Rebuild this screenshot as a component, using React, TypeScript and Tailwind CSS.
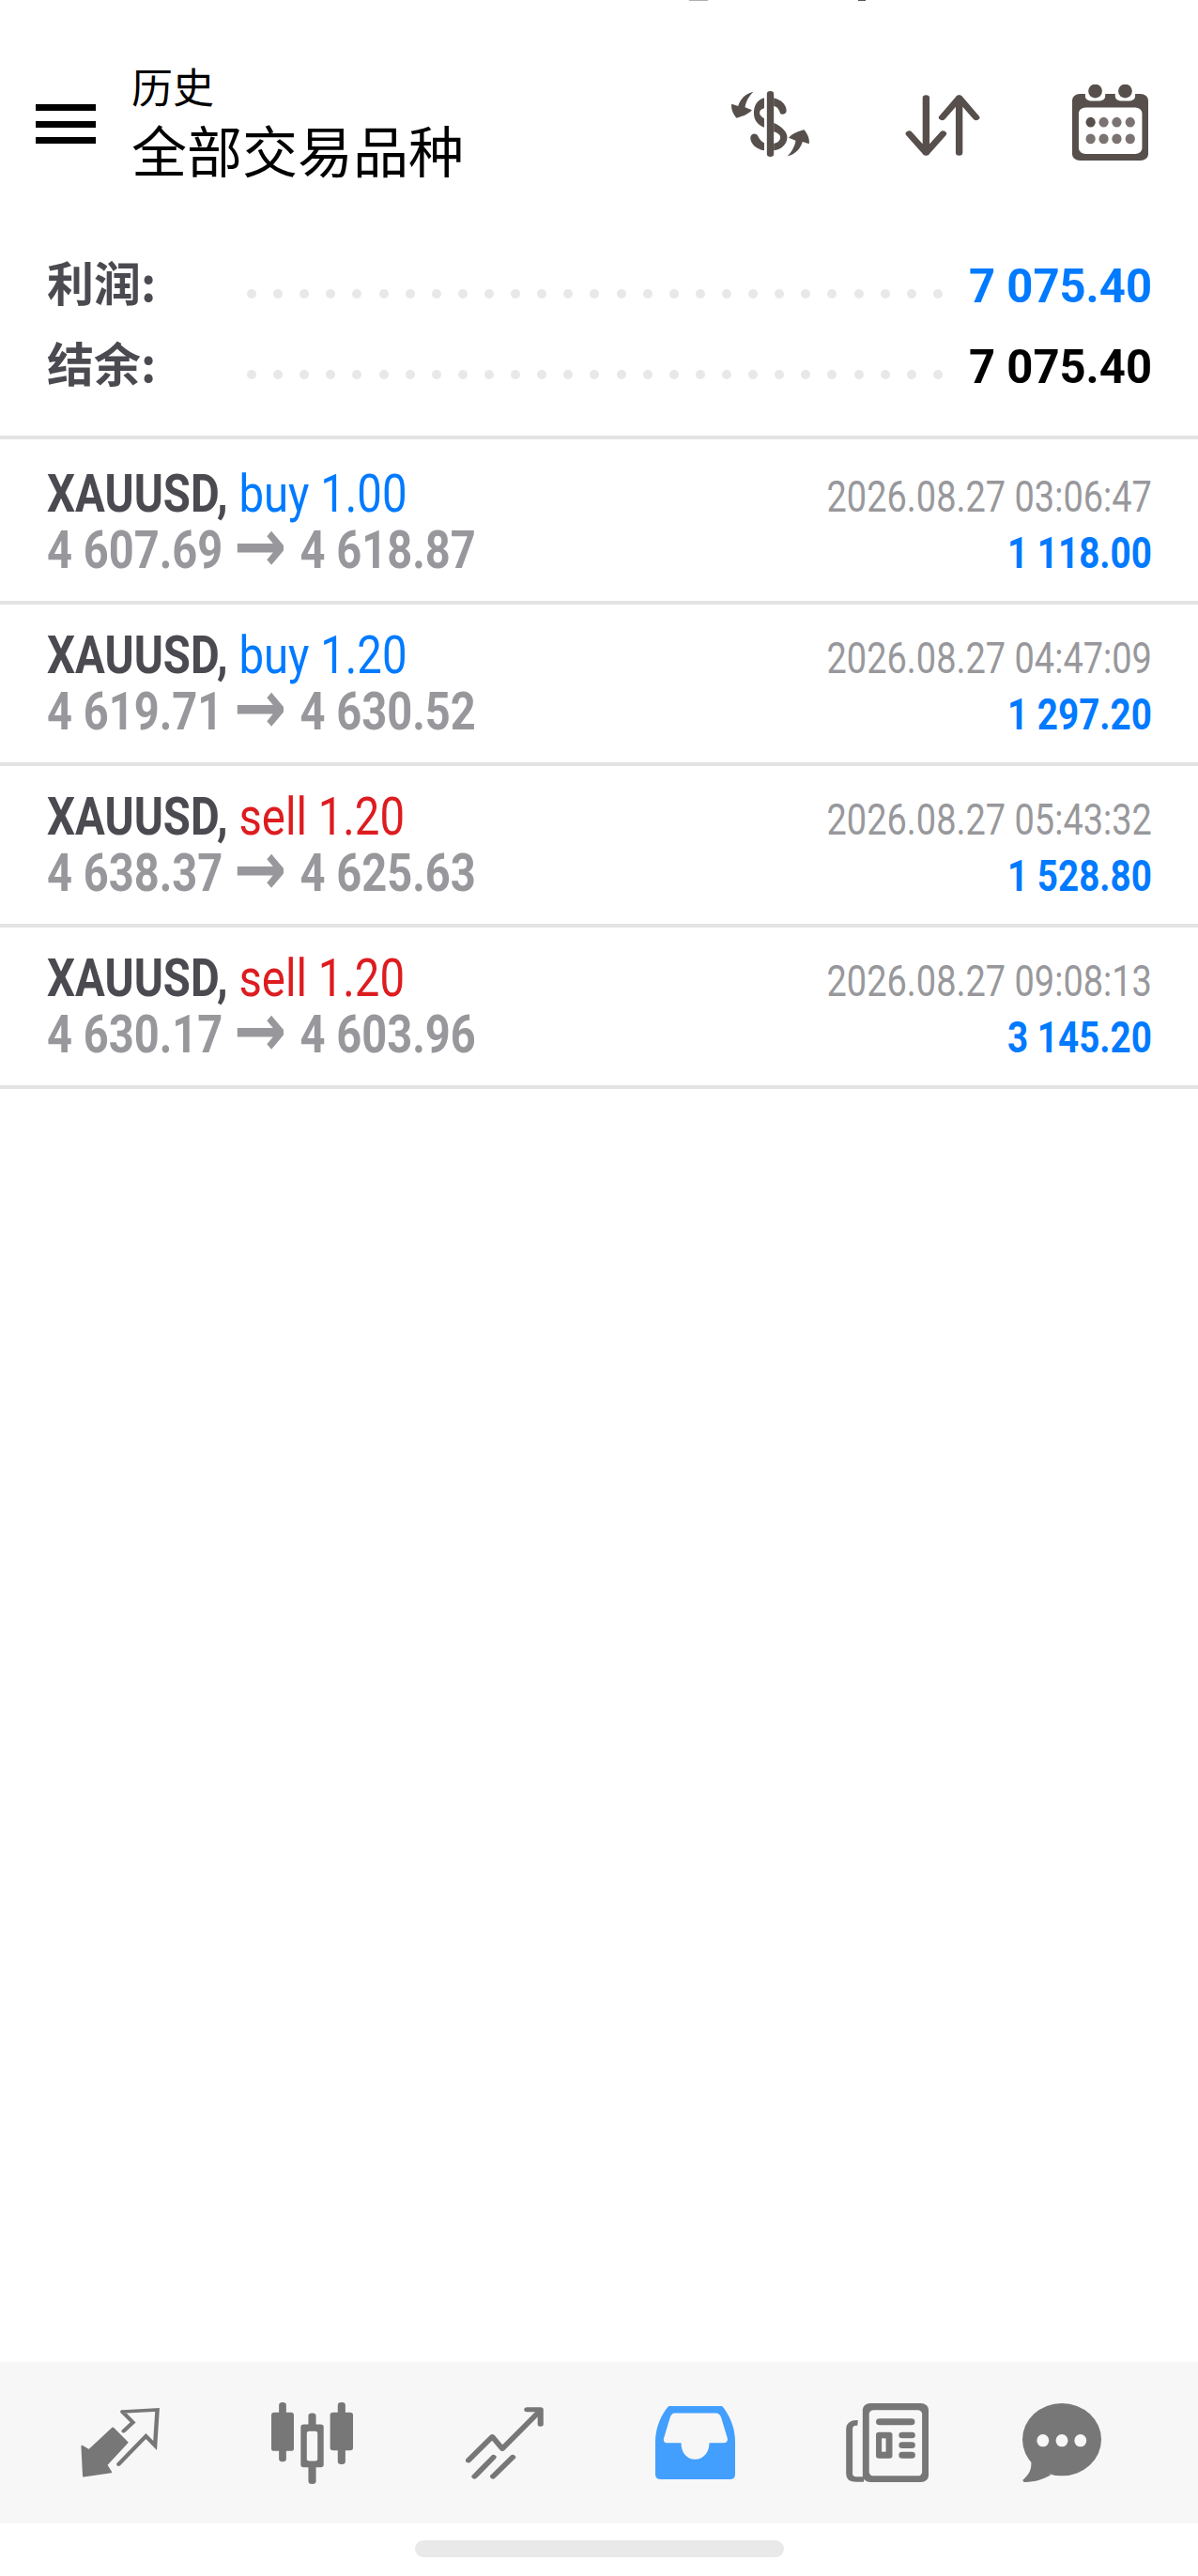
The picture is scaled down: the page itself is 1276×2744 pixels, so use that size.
const DARK = '#574f4c';
const GRAY = '#777777';

const trades = [
  { side: 'buy', lots: '1.00', open: '4 607.69', close: '4 618.87', time: '2026.08.27 03:06:47', profit: '1 118.00' },
  { side: 'buy', lots: '1.20', open: '4 619.71', close: '4 630.52', time: '2026.08.27 04:47:09', profit: '1 297.20' },
  { side: 'sell', lots: '1.20', open: '4 638.37', close: '4 625.63', time: '2026.08.27 05:43:32', profit: '1 528.80' },
  { side: 'sell', lots: '1.20', open: '4 630.17', close: '4 603.96', time: '2026.08.27 09:08:13', profit: '3 145.20' },
];

function Dots() {
  return (
    <div className="flex w-[741px] justify-between mt-[20px] ml-[102px]">
      {[...Array(27)].map((_, i) => (
        <span key={i} className="w-[10px] h-[10px] rounded-full bg-[#e8e8e8]" />
      ))}
    </div>
  );
}

function SummaryRow({ label, value, color }: { label: string; value: string; color: string }) {
  return (
    <div className="flex items-center h-[86px] pl-[50px] pr-[49px]">
      <span className="w-[111px] shrink-0 -mt-[8px] text-[50px] font-bold text-[#4a4a50] whitespace-nowrap font-['Noto_Sans_CJK_SC',sans-serif]">{label}</span>
      <Dots />
      <span className={`ml-auto mt-[5px] text-[50px] font-bold font-['Roboto',sans-serif] whitespace-nowrap origin-right scale-x-[0.98] ${color}`}>{value}</span>
    </div>
  );
}

function TradeRow({ t }: { t: (typeof trades)[number] }) {
  const isBuy = t.side === 'buy';
  return (
    <div className="flex justify-between h-[172px] first:h-[176px] pt-[24px] first:pt-[28px] pl-[50px] pr-[49px] border-b-4 border-[#e3e3e3] font-['Roboto',sans-serif]">
      <div className="whitespace-nowrap">
        <div className="h-[60px] leading-[60px] text-[56px] origin-left scale-x-[0.845]">
          <span className="font-bold text-[#4a4a50]">XAUUSD, </span>
          <span className={isBuy ? 'text-[#007aff]' : 'text-[#dd1c20]'}>{t.side} {t.lots}</span>
        </div>
        <div className="h-[60px] leading-[60px] text-[56px] font-bold text-[#98989c] origin-left scale-x-[0.84]">
          {t.open} <span className="mr-[3px] text-[80px] leading-[0] align-[-4px] font-['DejaVu_Sans',sans-serif]">→</span> {t.close}
        </div>
      </div>
      <div className="whitespace-nowrap text-right mt-[3px]">
        <div className="h-[60px] leading-[60px] text-[46px] text-[#98989c] origin-right scale-x-[0.825]">{t.time}</div>
        <div className="h-[60px] leading-[60px] text-[46px] font-bold text-[#007aff] origin-right scale-x-[0.84]">{t.profit}</div>
      </div>
    </div>
  );
}

function DollarIcon() {
  return (
    <svg width="85" height="70" viewBox="342 290 208 210" preserveAspectRatio="none" fill={DARK}>
      <rect x="437" y="290" width="18" height="210" rx="9" />
      <path d="M430 312C410 318 403 340 403 360C403 385 415 400 430 406L430 378C422 372 418 366 418 360C418 352 423 347 430 345Z" />
      <path d="M455 312C475 318 488 335 488 352C488 362 478 368 472 362C468 345 462 340 455 338Z" />
      <path d="M455 392C475 402 490 420 490 438C490 462 472 478 455 480L455 458C465 456 472 448 472 438C472 430 465 424 455 420Z" />
      <path d="M430 480C410 476 395 460 394 440C394 425 410 422 414 435C418 445 423 452 430 456Z" />
      <path d="M402 292C380 298 368 315 362 338L345 331C343 345 348 362 358 376C372 372 388 365 398 351L380 342C382 325 390 305 402 292Z" />
      <path d="M490 498C512 492 524 475 530 452L547 459C549 445 544 428 534 414C520 418 504 425 494 439L512 448C510 465 502 485 490 498Z" />
    </svg>
  );
}

function SortIcon() {
  return (
    <svg width="82" height="67" viewBox="795 295 200 200" preserveAspectRatio="none" fill="none" stroke={DARK} strokeWidth="18" strokeLinecap="round" strokeLinejoin="round">
      <path d="M852 308V482M808 422L852 482L896 422" />
      <path d="M938 482V308M894 370L938 308L982 370" />
    </svg>
  );
}

function CalendarIcon() {
  return (
    <svg width="81" height="81" viewBox="1240 270 198 242" preserveAspectRatio="none">
      <rect x="1240" y="300" width="198" height="212" rx="20" fill={DARK} />
      <rect x="1257" y="343" width="165" height="148" rx="18" fill="#fff" />
      <rect x="1274" y="280" width="52" height="42" rx="14" fill="#fff" />
      <rect x="1352" y="280" width="52" height="42" rx="14" fill="#fff" />
      <ellipse cx="1300" cy="291" rx="18" ry="22" fill={DARK} />
      <ellipse cx="1378" cy="291" rx="18" ry="22" fill={DARK} />
      {[390, 443].map((y) =>
        [1288, 1322, 1356, 1391].map((x) => (
          <ellipse key={`${x}-${y}`} cx={x} cy={y} rx="12.5" ry="16" fill={x === 1288 && y === 390 ? DARK : '#7b7371'} />
        )),
      )}
    </svg>
  );
}

function TradeTabIcon() {
  return (
    <svg width="87" height="76" viewBox="210 195 215 228" preserveAspectRatio="none" fill={GRAY}>
      <path d="M297 262L335 308L280 380L292 403L220 416L216 320L234 333Z" stroke={GRAY} strokeWidth="5" strokeLinejoin="round" />
      <path d="M322 210L414 204L408 318L384 288L312 378M322 210L350 244L325 272" fill="none" stroke={GRAY} strokeWidth="11" strokeLinejoin="miter" strokeLinecap="round" />
    </svg>
  );
}

function CandlesIcon() {
  return (
    <svg width="87" height="87" viewBox="708 173 214 260" preserveAspectRatio="none" fill={GRAY}>
      <rect x="728" y="173" width="19" height="189" rx="9" />
      <rect x="708" y="205" width="59" height="123" rx="8" />
      <rect x="882" y="173" width="20" height="197" rx="9" />
      <rect x="862" y="205" width="60" height="121" rx="8" />
      <rect x="805" y="207" width="20" height="226" rx="9" />
      <rect x="785" y="243" width="60" height="137" rx="8" />
      <rect x="801" y="265" width="28" height="95" rx="6" fill="#f7f7f7" />
    </svg>
  );
}

function ChartTabIcon() {
  return (
    <svg width="83" height="78" viewBox="1213 183 202 232" preserveAspectRatio="none" fill="none" stroke={GRAY} strokeWidth="15" strokeLinecap="round" strokeLinejoin="round">
      <path d="M1220 355L1282 280L1308 318L1400 205" />
      <path d="M1372 194H1407V240" />
      <path d="M1236 406L1285 345" />
      <path d="M1284 406L1335 345" />
    </svg>
  );
}

function InboxIcon() {
  return (
    <svg width="85" height="78" viewBox="145 183 207 232" preserveAspectRatio="none">
      <path d="M180 183H318C335 205 352 250 352 295V400Q352 415 338 415H160Q145 415 145 400V295C145 250 162 205 180 183Z" fill="#429ffe" />
      <path d="M195 205H302Q312 205 316 220L332 285Q334 300 320 300H285C285 330 270 352 248 352C226 352 212 330 212 300H178Q164 300 167 285L183 220Q187 205 195 205Z" fill="#f7f7f7" />
    </svg>
  );
}

function NewsIcon() {
  return (
    <svg width="88" height="84" viewBox="645 173 217 252" preserveAspectRatio="none" fill={GRAY}>
      <rect x="689" y="173" width="173" height="252" rx="20" />
      <rect x="706" y="195" width="139" height="210" rx="12" fill="#f7f7f7" />
      <path d="M676 236Q654 234 654 256V398Q654 416 672 416H692" fill="none" stroke={GRAY} strokeWidth="17" />
      <rect x="724" y="222" width="102" height="21" rx="10" />
      <rect x="724" y="265" width="43" height="84" rx="8" />
      <rect x="739" y="285" width="11" height="43" fill="#f7f7f7" />
      <rect x="784" y="265" width="43" height="20" rx="9" />
      <rect x="784" y="297" width="43" height="20" rx="9" />
      <rect x="784" y="328" width="43" height="21" rx="9" />
    </svg>
  );
}

function ChatIcon() {
  return (
    <svg width="84" height="84" viewBox="1107 173 208 252" preserveAspectRatio="none" fill={GRAY}>
      <ellipse cx="1211" cy="289" rx="104" ry="116" />
      <path d="M1130 360C1132 390 1120 405 1108 418Q1108 426 1115 425C1140 425 1165 415 1182 402Z" />
      <ellipse cx="1161" cy="292" rx="16" ry="20" fill="#f7f7f7" />
      <ellipse cx="1211" cy="292" rx="16" ry="20" fill="#f7f7f7" />
      <ellipse cx="1260" cy="292" rx="16" ry="20" fill="#f7f7f7" />
    </svg>
  );
}

export default function App() {
  return (
    <div className="relative flex flex-col h-[2744px] bg-white overflow-hidden">
      {/* bits of the status bar left at the very top */}
      <span className="absolute top-0 left-[734px] w-[20px] h-[1px] bg-[#b0b0b0]" />
      <span className="absolute top-0 left-[914px] w-[8px] h-[1px] bg-[#555555]" />

      {/* Header */}
      <div className="flex h-[260px] shrink-0">
        <div className="flex flex-col justify-between w-[64px] h-[42px] ml-[38px] mt-[111px] shrink-0">
          <span className="h-[7px] bg-black" />
          <span className="h-[7px] bg-black" />
          <span className="h-[7px] bg-black" />
        </div>
        <div className="ml-[38px] pt-[61px] text-black font-['Noto_Sans_CJK_SC',sans-serif] whitespace-nowrap">
          <div className="h-[60px] leading-[60px] text-[44px]">历史</div>
          <div className="h-[75px] leading-[75px] text-[59px]">全部交易品种</div>
        </div>
        <div className="ml-[284px] mt-[97px]"><DollarIcon /></div>
        <div className="ml-[100px] mt-[100px]"><SortIcon /></div>
        <div className="ml-[97px] mt-[90px]"><CalendarIcon /></div>
      </div>

      {/* Summary */}
      <div className="h-[208px] shrink-0 border-b-4 border-[#e3e3e3]">
        <SummaryRow label="利润:" value="7 075.40" color="text-[#007aff]" />
        <SummaryRow label="结余:" value="7 075.40" color="text-black" />
      </div>

      {/* Trades */}
      <div className="flex-1">
        {trades.map((t) => (
          <TradeRow key={t.time} t={t} />
        ))}
      </div>

      {/* Bottom tabs */}
      <div className="flex items-center h-[172px] shrink-0 pl-[85px] bg-[#f7f7f7]">
        <TradeTabIcon />
        <div className="ml-[117px]"><CandlesIcon /></div>
        <div className="ml-[120px]"><ChartTabIcon /></div>
        <div className="ml-[119px]"><InboxIcon /></div>
        <div className="ml-[118px]"><NewsIcon /></div>
        <div className="ml-[100px]"><ChatIcon /></div>
      </div>
      <div className="h-[56px] shrink-0 pt-[18px]">
        <div className="w-[393px] h-[18px] ml-[442px] rounded-full bg-[#e9e9e9]" />
      </div>
    </div>
  );
}
